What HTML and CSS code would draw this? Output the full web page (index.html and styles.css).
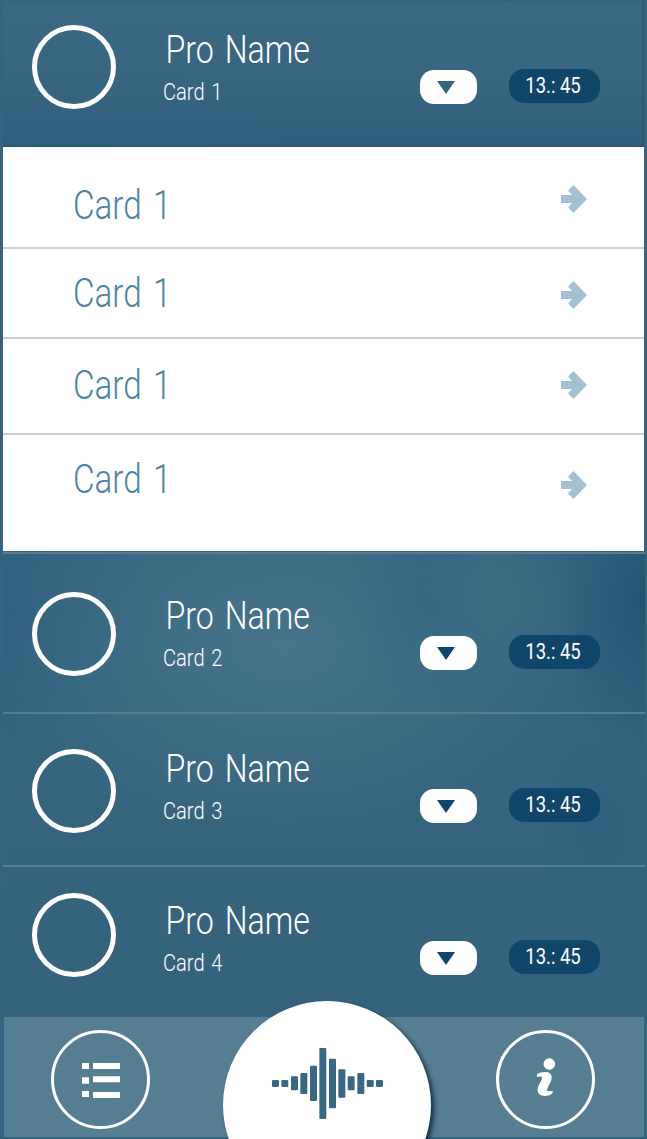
FILE: index.html
```html
<!DOCTYPE html>
<html lang="en">
<head>
<meta charset="utf-8">
<title>Pro Name</title>
<link rel="stylesheet" href="styles.css">
</head>
<body>
<main class="screen">
  <section class="row row-open">
    <div class="avatar"></div>
    <div class="who"><h2 class="name">Pro Name</h2><p class="sub">Card 1</p></div>
    <button class="toggle" aria-label="Collapse"><svg width="18" height="13" viewBox="0 0 18 13"><path d="M0 0H18L9 13Z"/></svg></button>
    <div class="time"><span>13.: 45</span></div>
  </section>
  <ul class="cards">
    <li class="card card-a"><span class="label">Card 1</span><svg class="arrow" viewBox="0 0 26 28"><path d="M0 10H11L7 5.5 12.5 0 26 14 12.5 28 7 22.5 11 18H0Z"/></svg></li>
    <li class="card card-b"><span class="label">Card 1</span><svg class="arrow" viewBox="0 0 26 28"><path d="M0 10H11L7 5.5 12.5 0 26 14 12.5 28 7 22.5 11 18H0Z"/></svg></li>
    <li class="card card-c"><span class="label">Card 1</span><svg class="arrow" viewBox="0 0 26 28"><path d="M0 10H11L7 5.5 12.5 0 26 14 12.5 28 7 22.5 11 18H0Z"/></svg></li>
    <li class="card card-d"><span class="label">Card 1</span><svg class="arrow" viewBox="0 0 26 28"><path d="M0 10H11L7 5.5 12.5 0 26 14 12.5 28 7 22.5 11 18H0Z"/></svg></li>
  </ul>
  <div class="rows">
    <section class="row row-2">
      <div class="avatar"></div>
      <div class="who"><h2 class="name">Pro Name</h2><p class="sub">Card 2</p></div>
      <button class="toggle" aria-label="Expand"><svg width="18" height="13" viewBox="0 0 18 13"><path d="M0 0H18L9 13Z"/></svg></button>
      <div class="time"><span>13.: 45</span></div>
    </section>
    <section class="row row-3">
      <div class="avatar"></div>
      <div class="who"><h2 class="name">Pro Name</h2><p class="sub">Card 3</p></div>
      <button class="toggle" aria-label="Expand"><svg width="18" height="13" viewBox="0 0 18 13"><path d="M0 0H18L9 13Z"/></svg></button>
      <div class="time"><span>13.: 45</span></div>
    </section>
    <section class="row row-4">
      <div class="avatar"></div>
      <div class="who"><h2 class="name">Pro Name</h2><p class="sub">Card 4</p></div>
      <button class="toggle" aria-label="Expand"><svg width="18" height="13" viewBox="0 0 18 13"><path d="M0 0H18L9 13Z"/></svg></button>
      <div class="time"><span>13.: 45</span></div>
    </section>
  </div>
  <nav class="bar">
    <svg class="round" viewBox="153 120 297 297">
      <circle cx="301.500" cy="268.500" r="144" fill="none" stroke="#fff" stroke-width="9"/>
      <path fill="#fff" d="M246 219h21v18h-21zM246 262h21v19h-21zM246 303h21v18h-21zM279 219h81v18h-81zM279 259h81v18h-81zM279 306h81v18h-81z"/>
    </svg>
    <svg class="round" viewBox="168 120 297 297">
      <circle cx="316.500" cy="268.500" r="144" fill="none" stroke="#fff" stroke-width="9"/>
      <circle cx="328" cy="222" r="17.500" fill="#fff"/>
      <path fill="#fff" d="M291 253C300 247 313 245 322 247C334 249 337 259 334 270C331 281 322 291 321 300C321 306 331 302 338 303C340 309 332 318 315 318C300 318 291 309 293 297C295 282 306 273 306 263C306 257 297 260 291 261Z"/>
    </svg>
    <div class="voice">
      <svg width="112" height="72" viewBox="186 174 336 216" fill="#3a6882">
        <rect x="186" y="270" width="21" height="21" rx="3"/><rect x="214" y="270" width="21" height="21" rx="3"/>
        <rect x="243" y="259" width="21" height="42" rx="3"/><rect x="271" y="249" width="21" height="63" rx="3"/>
        <rect x="300" y="227" width="21" height="106" rx="3"/><rect x="328" y="174" width="21" height="213" rx="3"/>
        <rect x="357" y="206" width="21" height="149" rx="3"/><rect x="385" y="238" width="21" height="85" rx="3"/>
        <rect x="413" y="259" width="21" height="42" rx="3"/><rect x="442" y="249" width="21" height="63" rx="3"/>
        <rect x="470" y="270" width="21" height="21" rx="3"/><rect x="498" y="270" width="21" height="21" rx="3"/>
      </svg>
    </div>
  </nav>
</main>
</body>
</html>
```
FILE: styles.css
```css
* { box-sizing: border-box; margin: 0; padding: 0; }
body { background: #36647f; font-family: Roboto, "Liberation Sans", sans-serif; font-weight: 300; color: #fff; }
svg { display: block; }
.screen { width: 647px; height: 1139px; padding: 0 2px 0 3px; overflow: hidden; display: flex; flex-direction: column; }

.row { display: grid; grid-template-columns: 84px 145px 57px 91px; column-gap: 0; padding-left: 29px; align-items: start; border-top: 2px solid #557d94; }
.avatar { width: 84px; height: 84px; border: 5px solid #fff; border-radius: 50%; margin-top: var(--avatar); }
.who { margin: var(--shift) 0 0 47px; white-space: nowrap; }
.name { font-size: 39.5px; line-height: 46px; font-weight: 300; padding: 27px 0 0 3px; word-spacing: 4px; transform: scaleX(.813); transform-origin: 0 0; }
.sub { font-size: 23.5px; line-height: 28px; font-weight: 300; padding-top: 5px; word-spacing: 2px; transform: scaleX(.855); transform-origin: 0 0; }
.toggle { width: 57px; height: 34px; border: 0; border-radius: 14px; background: #fff; fill: #10466a; display: flex; justify-content: center; padding: 11px 5px 0 0; margin: calc(var(--shift) + 70px) 0 0 159px; }
.time { width: 91px; height: 34px; border-radius: 15px; background: #10466a; font-size: 22px; line-height: 34px; text-align: center; white-space: nowrap; margin: calc(var(--shift) + 69px) 0 0 191px; font-weight: 400; }
.time span { display: inline-block; transform: scaleX(.84); margin: 0 -9px 0 -11px; }

.row-open { --avatar: 24px; --shift: -1px; height: 147px; width: 641px; border-top: 1px solid #36627c; border-right: 2px solid #2e5975; border-bottom: 2px solid #2b5878; background: radial-gradient(ellipse 260px 80px at 12% 100%, #31628399, transparent), linear-gradient(#3b6983, #386580 55%, #305d7b); }
.row-open .toggle { fill: #38657f; }
.rows { height: 465px; margin-top: 1px; background: radial-gradient(ellipse 90px 160px at 100% 11%, #225575, transparent), radial-gradient(ellipse 75px 90px at 76% 8%, #47738966, transparent), radial-gradient(ellipse 90px 110px at 67% 11%, #30617f77, transparent), radial-gradient(ellipse 300px 200px at 44% 20%, #47748c, transparent), radial-gradient(ellipse 160px 130px at 0 15%, #2e607f, transparent), radial-gradient(ellipse 60px 100px at 93% 60%, #2d5d7d99, transparent), linear-gradient(#36657f, #35637d); }
.row-2 { --avatar: 38px; --shift: 12px; height: 160px; }
.row-3 { --avatar: 35px; --shift: 5px; height: 153px; }
.row-4 { --avatar: 26px; --shift: 4px; height: 152px; }

.cards { width: 641px; background: #fff; list-style: none; }
.card { display: flex; justify-content: space-between; align-items: flex-start; padding: var(--text) 57px 0 70px; border-bottom: 2px solid #c5d1db; }
.label { font-size: 40px; line-height: 48px; word-spacing: 4px; color: #4c84a5; transform: scaleX(.83); transform-origin: 0 0; }
.arrow { width: 26px; height: 28px; fill: #a4c1d3; margin-top: var(--arrow); }
.card-a { height: 102px; --text: 35px; --arrow: 3px; }
.card-b { height: 90px; --text: 21px; --arrow: 11px; }
.card-c { height: 96px; --text: 23px; --arrow: 9px; }
.card-d { height: 116px; --text: 21px; --arrow: 15px; border: 0; }

.bar { position: relative; width: 640px; height: 120px; margin-left: 1px; padding: 13px 49px 0 47px; background: #567e93; display: flex; justify-content: space-between; flex-shrink: 0; }
.round { width: 99px; height: 99px; }
.voice { position: absolute; left: 219px; top: -16px; width: 208px; height: 208px; border-radius: 50%; background: #fff; box-shadow: 3px 3px 5px #172f3f; padding: 47px 0 0 49px; }
```
